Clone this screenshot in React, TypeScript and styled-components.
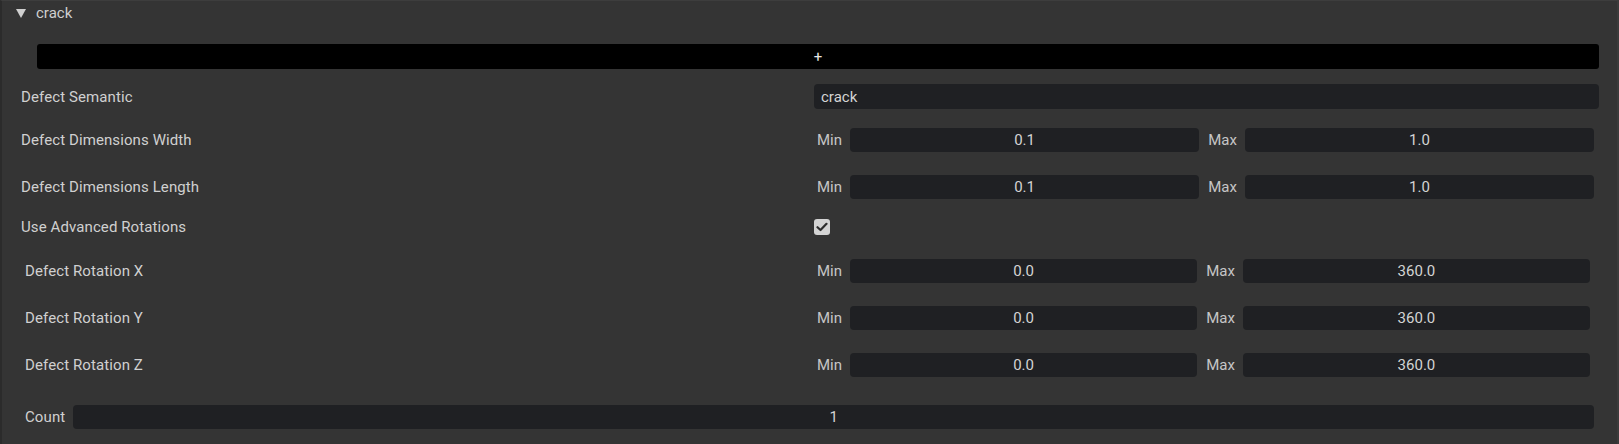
import React, { FC } from 'react'
import styled, { createGlobalStyle } from 'styled-components'

const Global = createGlobalStyle`
  html, body {
    margin: 0;
    padding: 0;
    background: #343434;
  }
  body {
    font-family: Roboto, 'Liberation Sans', sans-serif;
  }
`

const Frame = styled.div`
  box-sizing: border-box;
  width: 1619px;
  height: 444px;
  display: flex;
  flex-direction: column;
  background-color: #343434;
  border-top: 1px solid #3d3d3d;
  border-left: 2px solid #2b2b2b;
  border-right: 2px solid #3b3b3b;
  overflow: hidden;
`

const Header = styled.div`
  display: flex;
  align-items: center;
  height: 23px;
  padding-left: 14px;
  gap: 10px;
  color: #cfcfcf;
  font-size: 15px;
`

const Triangle = styled.span`
  width: 0;
  height: 0;
  border-left: 5px solid transparent;
  border-right: 5px solid transparent;
  border-top: 9px solid #cfcfcf;
  margin-top: 1px;
`

const Body = styled.div`
  display: flex;
  flex-direction: column;
  padding: 0 18px 0 19px;
`

const AddBar = styled.button`
  margin: 20px 0 0 16px;
  height: 25px;
  border: none;
  border-radius: 3px;
  background-color: #000000;
  color: #e6e6e6;
  font-family: Roboto, 'Liberation Sans', sans-serif;
  font-size: 15px;
  padding: 0;
`

const Row = styled.div<{ $top: number; $height?: number; $inset?: number; $insetRight?: number }>`
  display: flex;
  align-items: center;
  margin-top: ${(p) => p.$top}px;
  height: ${(p) => p.$height ?? 24}px;
  padding-left: ${(p) => p.$inset ?? 0}px;
  padding-right: ${(p) => p.$insetRight ?? p.$inset ?? 0}px;
`

const Label = styled.div<{ $width?: number; $gap?: number }>`
  flex: 0 0 auto;
  width: ${(p) => (p.$width ? `${p.$width}px` : 'auto')};
  margin-right: ${(p) => p.$gap ?? 0}px;
  color: #d0d0d0;
  font-size: 15px;
  letter-spacing: 0.1px;
  white-space: nowrap;
`

const Value = styled.div`
  flex: 1;
  display: flex;
  align-items: center;
  height: 100%;
`

const Range = styled.div`
  flex: 1;
  display: flex;
  align-items: center;
  height: 100%;
  padding: 0 5px 0 3px;
`

const RangeLabel = styled.span<{ $lead?: number }>`
  color: #c6c6c6;
  font-size: 15px;
  margin-left: ${(p) => p.$lead ?? 0}px;
  margin-right: 8px;
`

const Field = styled.div<{ $align?: 'left' | 'center' }>`
  flex: 1;
  height: 100%;
  display: flex;
  align-items: center;
  justify-content: ${(p) => (p.$align === 'left' ? 'flex-start' : 'center')};
  padding: 0 7px;
  box-sizing: border-box;
  border-radius: 4px;
  background-color: #1f2023;
  color: #d4d4d4;
  font-size: 15px;
`

const CheckBox = styled.div`
  width: 16px;
  height: 16px;
  border-radius: 3px;
  background-color: #d4d4d4;
  display: flex;
  align-items: center;
  justify-content: center;
`

const MinMax: FC<{ min: string; max: string }> = ({ min, max }) => (
  <Range>
    <RangeLabel>Min</RangeLabel>
    <Field>{min}</Field>
    <RangeLabel $lead={9}>Max</RangeLabel>
    <Field>{max}</Field>
  </Range>
)

export default function App() {
  return (
    <>
      <Global />
      <Frame>
        <Header>
          <Triangle />
          <span>crack</span>
        </Header>
        <Body>
          <AddBar>+</AddBar>

          <Row $top={15} $height={25}>
            <Label $width={793}>Defect Semantic</Label>
            <Value>
              <Field $align="left">crack</Field>
            </Value>
          </Row>

          <Row $top={19}>
            <Label $width={793}>Defect Dimensions Width</Label>
            <MinMax min="0.1" max="1.0" />
          </Row>

          <Row $top={23}>
            <Label $width={793}>Defect Dimensions Length</Label>
            <MinMax min="0.1" max="1.0" />
          </Row>

          <Row $top={16}>
            <Label $width={793}>Use Advanced Rotations</Label>
            <Value>
              <CheckBox>
                <svg width="12" height="10" viewBox="0 0 12 10">
                  <path d="M1.5 5.2 L4.5 8 L10.5 1.8" fill="none" stroke="#2e2e2e" strokeWidth="2.2" strokeLinecap="round" strokeLinejoin="round" />
                </svg>
              </CheckBox>
            </Value>
          </Row>

          <Row $top={20} $inset={4}>
            <Label $width={789}>Defect Rotation X</Label>
            <MinMax min="0.0" max="360.0" />
          </Row>

          <Row $top={23} $inset={4}>
            <Label $width={789}>Defect Rotation Y</Label>
            <MinMax min="0.0" max="360.0" />
          </Row>

          <Row $top={23} $inset={4}>
            <Label $width={789}>Defect Rotation Z</Label>
            <MinMax min="0.0" max="360.0" />
          </Row>

          <Row $top={28} $inset={4} $insetRight={5}>
            <Label $gap={8}>Count</Label>
            <Field>1</Field>
          </Row>
        </Body>
      </Frame>
    </>
  )
}
